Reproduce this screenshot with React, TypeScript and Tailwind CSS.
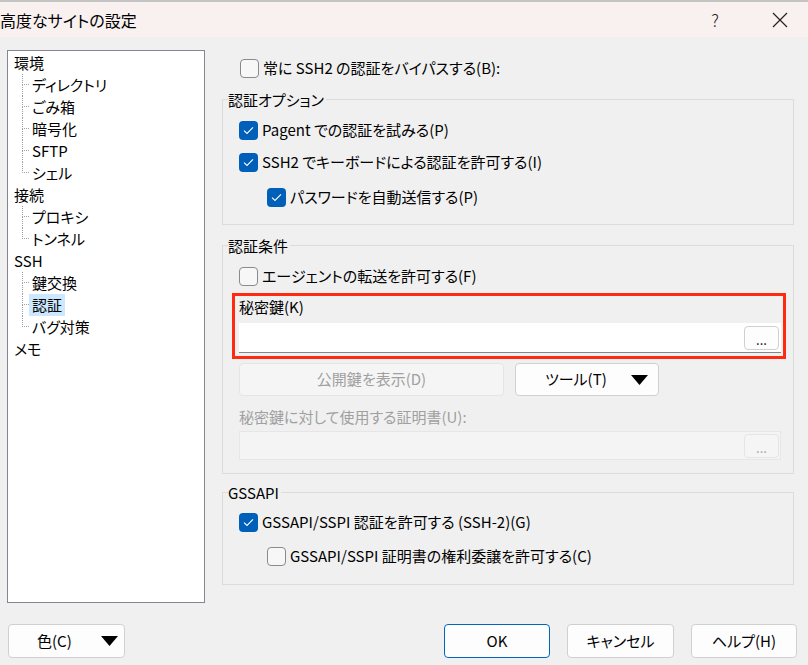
import React from "react";

const tree = [
  { label: "環境", children: ["ディレクトリ", "ごみ箱", "暗号化", "SFTP", "シェル"] },
  { label: "接続", children: ["プロキシ", "トンネル"] },
  { label: "SSH", children: ["鍵交換", "認証", "バグ対策"] },
  { label: "メモ", children: [] as string[] },
];

const Checkbox = ({ checked }: { checked: boolean }) =>
  checked ? (
    <span className="flex h-[19px] w-[19px] shrink-0 items-center justify-center rounded-[4px] bg-[#005fb8]">
      <svg width="11" height="9" viewBox="0 0 11 9" fill="none">
        <path d="M1 4.6 L4 7.4 L10 1.4" stroke="white" strokeWidth="1.1" />
      </svg>
    </span>
  ) : (
    <span className="h-[19px] w-[19px] shrink-0 rounded-[4px] border border-[#8a8a8a] bg-[#f7f7f7]" />
  );

const CheckRow = ({ checked, label, className = "" }: { checked: boolean; label: string; className?: string }) => (
  <div className={"flex h-[20px] items-center gap-[4px] " + className}>
    <Checkbox checked={checked} />
    <span className="leading-[20px]">{label}</span>
  </div>
);

const Group = ({ title, className = "", children }: { title: string; className?: string; children: React.ReactNode }) => (
  <div className={"border border-[#dcdcdc] pl-[16px] pr-[12px] " + className}>
    <div className="-mt-[10px] ml-[-11px] w-fit bg-[#f0f0f0] pr-[2px] leading-[20px]">{title}</div>
    {children}
  </div>
);

const Triangle = () => (
  <svg width="17" height="10" viewBox="0 0 17 10">
    <path d="M0 0 H17 L8.5 10 Z" fill="black" />
  </svg>
);

const DotsButton = ({ disabled }: { disabled?: boolean }) => (
  <div
    className={
      "flex h-[24px] w-[35px] items-end justify-center rounded-[4px] border pb-[3px] text-[13px] leading-[13px] " +
      (disabled ? "border-[#e5e5e5] bg-[#f5f5f5] text-[#a0a0a0]" : "border-[#d0d0d0] bg-[#fdfdfd] text-black")
    }
  >
    ...
  </div>
);

export default function App() {
  return (
    <div className="relative h-[665px] w-[808px] overflow-hidden bg-[#f0f0f0] font-['Noto_Sans_CJK_JP','Noto_Sans',sans-serif] text-[15px] text-black [font-feature-settings:'palt']">
      {/* title bar */}
      <div className="h-[2px] bg-[#c4c4c4]" />
      <div className="flex h-[35px] items-center bg-[#f9f0f0]">
        <span className="text-[16px] leading-[20px]">高度なサイトの設定</span>
        <span className="ml-auto mr-[53px] text-[17px] font-light leading-[20px] text-[#222]">?</span>
        <svg width="16" height="16" viewBox="0 0 16 16" className="mr-[20px]">
          <path d="M1 1 L15 15 M15 1 L1 15" stroke="#222" strokeWidth="1.2" />
        </svg>
      </div>

      {/* main */}
      <div className="flex items-start pt-[13px]">
        <div className="ml-[7px] h-[553px] w-[198px] border border-[#868690] bg-white pl-[6px] pt-[1px]">
          {tree.map((node) => (
            <div key={node.label}>
              <div className="flex h-[22px] items-center leading-[20px]">{node.label}</div>
              {node.children.map((c, i) => {
                const last = i === node.children.length - 1;
                const selected = c === "認証";
                return (
                  <div key={c} className="ml-[8px] flex h-[22px] items-stretch">
                    <div className="flex w-[7px] flex-col">
                      <div className="h-[11px] border-b border-l border-dotted border-[#a0a0a0]" />
                      <div className={"flex-1 border-l border-dotted " + (last ? "border-transparent" : "border-[#a0a0a0]")} />
                    </div>
                    <span className={"flex items-center px-[3px] leading-[20px] " + (selected ? "bg-[#cce8ff]" : "")}>{c}</span>
                  </div>
                );
              })}
            </div>
          ))}
        </div>

        <div className="ml-[17px] w-[572px] pt-[8px]">
          <CheckRow checked={false} label="常に SSH2 の認証をバイパスする(B):" className="ml-[18px]" />

          <Group title="認証オプション" className="mt-[21px] pb-[17px]">
            <CheckRow checked label="Pagent での認証を試みる(P)" className="mt-[10px]" />
            <CheckRow checked label="SSH2 でキーボードによる認証を許可する(I)" className="mt-[12px]" />
            <CheckRow checked label="パスワードを自動送信する(P)" className="ml-[28px] mt-[15px]" />
          </Group>

          <Group title="認証条件" className="mt-[20px] pb-[13px]">
            <CheckRow checked={false} label="エージェントの転送を許可する(F)" className="mt-[10px]" />
            <div className="-ml-[7px] -mr-[5px] mt-[7px] border-[3px] border-[#ff2a12] pb-[3px] pl-[4px] pr-[2px] pt-[1px]">
              <div className="leading-[20px]">秘密鍵(K)</div>
              <div className="mt-[6px] flex h-[30px] items-center justify-end border-b border-[#858585] bg-white pr-[2px]">
                <DotsButton />
              </div>
            </div>
            <div className="mt-[4px] flex gap-[11px]">
              <div className="flex h-[33px] w-[265px] items-center justify-center rounded-[4px] border border-[#e5e5e5] bg-[#f5f5f5] text-[#a0a0a0]">
                公開鍵を表示(D)
              </div>
              <div className="flex h-[33px] w-[144px] items-center rounded-[4px] border border-[#d0d0d0] bg-[#fdfdfd] pl-[29px] pr-[10px]">
                <span>ツール(T)</span>
                <span className="ml-auto">
                  <Triangle />
                </span>
              </div>
            </div>
            <div className="mt-[11px] leading-[20px] text-[#a0a0a0]">秘密鍵に対して使用する証明書(U):</div>
            <div className="mt-[4px] flex h-[29px] items-center justify-end border border-[#e6e6e6] bg-[#f4f4f4] pr-[1px]">
              <DotsButton disabled />
            </div>
          </Group>

          <Group title="GSSAPI" className="mt-[18px] pb-[18px]">
            <CheckRow checked label="GSSAPI/SSPI 認証を許可する (SSH-2)(G)" className="mt-[9px]" />
            <CheckRow checked={false} label="GSSAPI/SSPI 証明書の権利委譲を許可する(C)" className="ml-[28px] mt-[14px]" />
          </Group>
        </div>
      </div>

      {/* bottom buttons */}
      <div className="mt-[21px] flex items-center pl-[8px] pr-[11px]">
        <div className="flex h-[34px] w-[117px] items-center rounded-[4px] border border-[#d0d0d0] bg-[#fdfdfd] pl-[28px] pr-[6px]">
          <span>色(C)</span>
          <span className="ml-auto">
            <Triangle />
          </span>
        </div>
        <div className="ml-auto flex gap-[17px]">
          <div className="flex h-[34px] w-[106px] items-center justify-center rounded-[4px] border border-[#0067c0] bg-[#fdfdfd]">OK</div>
          <div className="flex h-[34px] w-[107px] items-center justify-center rounded-[4px] border border-[#d0d0d0] bg-[#fdfdfd]">キャンセル</div>
          <div className="flex h-[34px] w-[106px] items-center justify-center rounded-[4px] border border-[#d0d0d0] bg-[#fdfdfd]">ヘルプ(H)</div>
        </div>
      </div>
    </div>
  );
}
